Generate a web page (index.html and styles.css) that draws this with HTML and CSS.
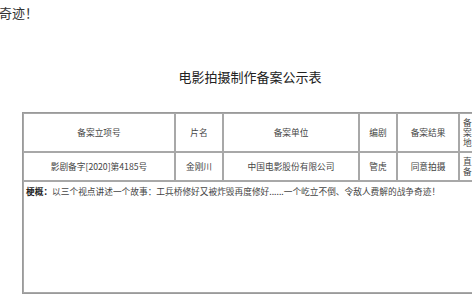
FILE: index.html
```html
<!DOCTYPE html>
<html lang="zh-CN">
<head>
<meta charset="utf-8">
<link rel="stylesheet" href="styles.css">
</head>
<body>
<div class="tail">的战争奇迹！</div>
<div class="wrap">
  <h1 class="title">电影拍摄制作备案公示表</h1>
  <table class="record">
    <tr class="head">
      <th class="c1">备案立项号</th>
      <th class="c2">片名</th>
      <th class="c3">备案单位</th>
      <th class="c4">编剧</th>
      <th class="c5">备案结果</th>
      <th class="c6">备案地</th>
    </tr>
    <tr class="data">
      <td>影剧备字[2020]第4185号</td>
      <td>金刚川</td>
      <td>中国电影股份有限公司</td>
      <td>管虎</td>
      <td>同意拍摄</td>
      <td class="c6">直备</td>
    </tr>
    <tr class="summary">
      <td colspan="6"><b>梗概：</b>以三个视点讲述一个故事：工兵桥修好又被炸毁再度修好......一个屹立不倒、令敌人费解的战争奇迹！</td>
    </tr>
  </table>
</div>
</body>
</html>
```
FILE: styles.css
```css
html, body {
  margin: 0;
  padding: 0;
  overflow: hidden;
  background: #fff;
}
body {
  font-family: "Noto Sans CJK SC", "Noto Sans", sans-serif;
  color: #333;
}
.tail {
  font-size: 13px;
  line-height: 16px;
  padding-top: 5px;
  margin-left: -40px;
  white-space: nowrap;
  color: #333;
}
.wrap {
  width: 456px;
  margin-left: 22px;
}
.title {
  margin: 0;
  padding-top: 47px;
  height: 91px;
  box-sizing: border-box;
  text-align: center;
  font-size: 13px;
  line-height: 18px;
  font-weight: normal;
  color: #222;
}
.record {
  table-layout: fixed;
  width: 456px;
  border-collapse: separate;
  border-spacing: 0;
  border: 1px solid #9a9a9a;
  font-size: 8.7px;
  line-height: 10px;
  color: #444;
}
.record th, .record td {
  box-sizing: border-box;
  border: 1px solid #a8a8a8;
  padding: 0;
  text-align: center;
  vertical-align: middle;
  font-weight: normal;
}
.c1 { width: 152px; }
.c2 { width: 48px; }
.c3 { width: 136px; }
.c4 { width: 38px; }
.c5 { width: 62px; }
.c6 { width: 18px; }
.record .c6 {
  text-align: left;
  padding-left: 3px;
}
.head { height: 39px; }
.data { height: 29px; }
.summary { height: 112px; }
.record .summary td {
  text-align: left;
  vertical-align: top;
  padding: 4px 3px 0 2px;
  line-height: 11px;
}
.summary b {
  font-weight: bold;
  color: #222;
}
```
